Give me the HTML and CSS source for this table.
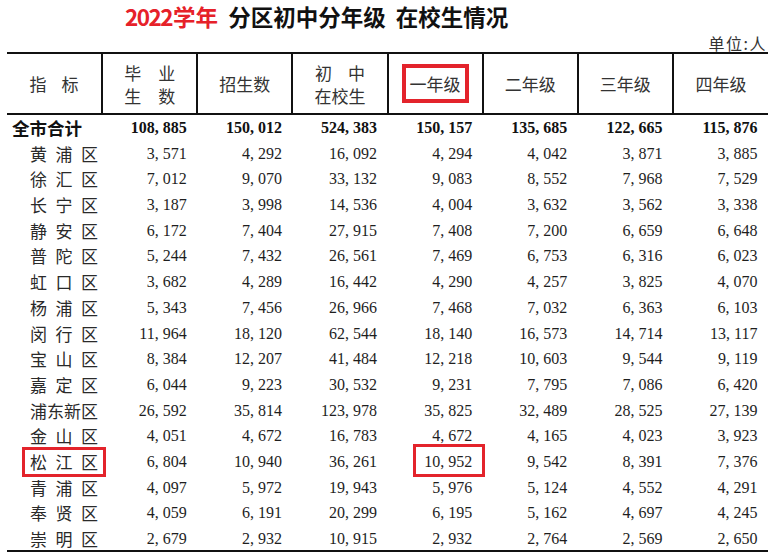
FILE: index.html
```html
<!DOCTYPE html>
<html lang="zh-CN">
<head>
<meta charset="utf-8">
<title>2022学年 分区初中分年级 在校生情况</title>
<link rel="stylesheet" href="styles.css">
</head>
<body>
<div class="page">
  <h1 class="title"><span class="yr"><span class="digits">2022</span>学年</span> 分区初中分年级 在校生情况</h1>
  <div class="unit">单位:人</div>
  <table class="tbl">
    <thead>
      <tr>
        <th><span class="jt w49">指标</span></th>
        <th><span class="jt w51">毕业</span><br><span class="jt w51">生数</span></th>
        <th>招生数</th>
        <th><span class="jt w50">初中</span><br>在校生</th>
        <th><span class="hl">一年级</span></th>
        <th>二年级</th>
        <th>三年级</th>
        <th>四年级</th>
      </tr>
    </thead>
    <tbody>
      <tr class="total"><td class="name">全市合计</td><td>108<span class="c">,</span>885</td><td>150<span class="c">,</span>012</td><td>524<span class="c">,</span>383</td><td>150<span class="c">,</span>157</td><td>135<span class="c">,</span>685</td><td>122<span class="c">,</span>665</td><td>115<span class="c">,</span>876</td></tr>
      <tr><td class="name"><span class="jn">黄浦区</span></td><td>3<span class="c">,</span>571</td><td>4<span class="c">,</span>292</td><td>16<span class="c">,</span>092</td><td>4<span class="c">,</span>294</td><td>4<span class="c">,</span>042</td><td>3<span class="c">,</span>871</td><td>3<span class="c">,</span>885</td></tr>
      <tr><td class="name"><span class="jn">徐汇区</span></td><td>7<span class="c">,</span>012</td><td>9<span class="c">,</span>070</td><td>33<span class="c">,</span>132</td><td>9<span class="c">,</span>083</td><td>8<span class="c">,</span>552</td><td>7<span class="c">,</span>968</td><td>7<span class="c">,</span>529</td></tr>
      <tr><td class="name"><span class="jn">长宁区</span></td><td>3<span class="c">,</span>187</td><td>3<span class="c">,</span>998</td><td>14<span class="c">,</span>536</td><td>4<span class="c">,</span>004</td><td>3<span class="c">,</span>632</td><td>3<span class="c">,</span>562</td><td>3<span class="c">,</span>338</td></tr>
      <tr><td class="name"><span class="jn">静安区</span></td><td>6<span class="c">,</span>172</td><td>7<span class="c">,</span>404</td><td>27<span class="c">,</span>915</td><td>7<span class="c">,</span>408</td><td>7<span class="c">,</span>200</td><td>6<span class="c">,</span>659</td><td>6<span class="c">,</span>648</td></tr>
      <tr><td class="name"><span class="jn">普陀区</span></td><td>5<span class="c">,</span>244</td><td>7<span class="c">,</span>432</td><td>26<span class="c">,</span>561</td><td>7<span class="c">,</span>469</td><td>6<span class="c">,</span>753</td><td>6<span class="c">,</span>316</td><td>6<span class="c">,</span>023</td></tr>
      <tr><td class="name"><span class="jn">虹口区</span></td><td>3<span class="c">,</span>682</td><td>4<span class="c">,</span>289</td><td>16<span class="c">,</span>442</td><td>4<span class="c">,</span>290</td><td>4<span class="c">,</span>257</td><td>3<span class="c">,</span>825</td><td>4<span class="c">,</span>070</td></tr>
      <tr><td class="name"><span class="jn">杨浦区</span></td><td>5<span class="c">,</span>343</td><td>7<span class="c">,</span>456</td><td>26<span class="c">,</span>966</td><td>7<span class="c">,</span>468</td><td>7<span class="c">,</span>032</td><td>6<span class="c">,</span>363</td><td>6<span class="c">,</span>103</td></tr>
      <tr><td class="name"><span class="jn">闵行区</span></td><td>11<span class="c">,</span>964</td><td>18<span class="c">,</span>120</td><td>62<span class="c">,</span>544</td><td>18<span class="c">,</span>140</td><td>16<span class="c">,</span>573</td><td>14<span class="c">,</span>714</td><td>13<span class="c">,</span>117</td></tr>
      <tr><td class="name"><span class="jn">宝山区</span></td><td>8<span class="c">,</span>384</td><td>12<span class="c">,</span>207</td><td>41<span class="c">,</span>484</td><td>12<span class="c">,</span>218</td><td>10<span class="c">,</span>603</td><td>9<span class="c">,</span>544</td><td>9<span class="c">,</span>119</td></tr>
      <tr><td class="name"><span class="jn">嘉定区</span></td><td>6<span class="c">,</span>044</td><td>9<span class="c">,</span>223</td><td>30<span class="c">,</span>532</td><td>9<span class="c">,</span>231</td><td>7<span class="c">,</span>795</td><td>7<span class="c">,</span>086</td><td>6<span class="c">,</span>420</td></tr>
      <tr><td class="name"><span class="jn">浦东新区</span></td><td>26<span class="c">,</span>592</td><td>35<span class="c">,</span>814</td><td>123<span class="c">,</span>978</td><td>35<span class="c">,</span>825</td><td>32<span class="c">,</span>489</td><td>28<span class="c">,</span>525</td><td>27<span class="c">,</span>139</td></tr>
      <tr><td class="name"><span class="jn">金山区</span></td><td>4<span class="c">,</span>051</td><td>4<span class="c">,</span>672</td><td>16<span class="c">,</span>783</td><td>4<span class="c">,</span>672</td><td>4<span class="c">,</span>165</td><td>4<span class="c">,</span>023</td><td>3<span class="c">,</span>923</td></tr>
      <tr><td class="name"><span class="jn mark-name">松江区</span></td><td>6<span class="c">,</span>804</td><td>10<span class="c">,</span>940</td><td>36<span class="c">,</span>261</td><td><span class="mark-num">10<span class="c">,</span>952</span></td><td>9<span class="c">,</span>542</td><td>8<span class="c">,</span>391</td><td>7<span class="c">,</span>376</td></tr>
      <tr><td class="name"><span class="jn">青浦区</span></td><td>4<span class="c">,</span>097</td><td>5<span class="c">,</span>972</td><td>19<span class="c">,</span>943</td><td>5<span class="c">,</span>976</td><td>5<span class="c">,</span>124</td><td>4<span class="c">,</span>552</td><td>4<span class="c">,</span>291</td></tr>
      <tr><td class="name"><span class="jn">奉贤区</span></td><td>4<span class="c">,</span>059</td><td>6<span class="c">,</span>191</td><td>20<span class="c">,</span>299</td><td>6<span class="c">,</span>195</td><td>5<span class="c">,</span>162</td><td>4<span class="c">,</span>697</td><td>4<span class="c">,</span>245</td></tr>
      <tr class="last"><td class="name"><span class="jn">崇明区</span></td><td>2<span class="c">,</span>679</td><td>2<span class="c">,</span>932</td><td>10<span class="c">,</span>915</td><td>2<span class="c">,</span>932</td><td>2<span class="c">,</span>764</td><td>2<span class="c">,</span>569</td><td>2<span class="c">,</span>650</td></tr>
    </tbody>
  </table>
</div>
</body>
</html>
```

FILE: styles.css
```css
html, body {
  margin: 0;
  padding: 0;
  background: #fff;
}

body {
  color: #1e1e1e;
  font-family: "Liberation Serif", "Noto Sans CJK SC", serif;
}

.page {
  padding-left: 7px;
  width: 761px;
}

.title {
  margin: 0;
  padding-left: 118px;
  font: 700 22.5px/33px "Noto Sans CJK SC", sans-serif;
  color: #111;
  white-space: nowrap;
  word-spacing: 5px;
}

.title .yr {
  color: #e62129;
}

.title .digits {
  letter-spacing: -1.5px;
  margin-right: 1px;
}

.unit {
  margin-top: 1px;
  padding-right: 1px;
  text-align: right;
  font: 400 16px/18px "Noto Sans CJK SC", sans-serif;
  letter-spacing: 1.5px;
  color: #333;
}

.tbl {
  width: 761px;
  table-layout: fixed;
  border-collapse: collapse;
  border-top: 2px solid #111;
  border-bottom: 2px solid #111;
}

.tbl th {
  height: 59px;
  padding: 0;
  border-left: 2px solid #111;
  border-bottom: 2px solid #111;
  font: 400 17px/23px "Noto Sans CJK SC", sans-serif;
  color: #333;
  text-align: center;
  vertical-align: middle;
}

.tbl th:first-child {
  border-left: 0;
}

.jt {
  display: inline-block;
  text-align: justify;
  text-align-last: justify;
}

.w49 { width: 49px; }
.w50 { width: 50px; }
.w51 { width: 51px; }

.hl {
  display: inline-block;
  box-sizing: border-box;
  width: 67px;
  height: 39px;
  line-height: 31px;
  text-align: center;
  border: 4px solid #e3232b;
  vertical-align: middle;
}

.tbl td {
  padding: 2px 10.5px 1.7px 0;
  font-size: 16px;
  line-height: 22px;
  text-align: right;
  white-space: nowrap;
  vertical-align: top;
}

.tbl .last td {
  padding-bottom: 0;
  line-height: 21px;
}

.tbl td.name {
  padding-left: 23px;
  padding-right: 0;
  text-align: left;
  font: 400 17px/22px "Noto Sans CJK SC", sans-serif;
  color: #2a2a2a;
}

.tbl .total td {
  font-weight: 700;
  color: #111;
}

.tbl .total td.name {
  padding-left: 5px;
  font: 700 17.5px/22px "Noto Sans CJK SC", sans-serif;
}

.c {
  display: inline-block;
  width: 8px;
  text-align: left;
}

.jn {
  display: inline-block;
  width: 68px;
  text-align: justify;
  text-align-last: justify;
}

.mark-name,
.mark-num {
  position: relative;
  display: inline-block;
}

.mark-name::after,
.mark-num::after {
  content: "";
  position: absolute;
  border: 3px solid #e3232b;
}

.mark-name::after {
  left: -8px;
  right: -8px;
  top: -4px;
  bottom: -4px;
}

.mark-num::after {
  left: -11px;
  right: -13px;
  top: -7px;
  bottom: -4px;
}
```
